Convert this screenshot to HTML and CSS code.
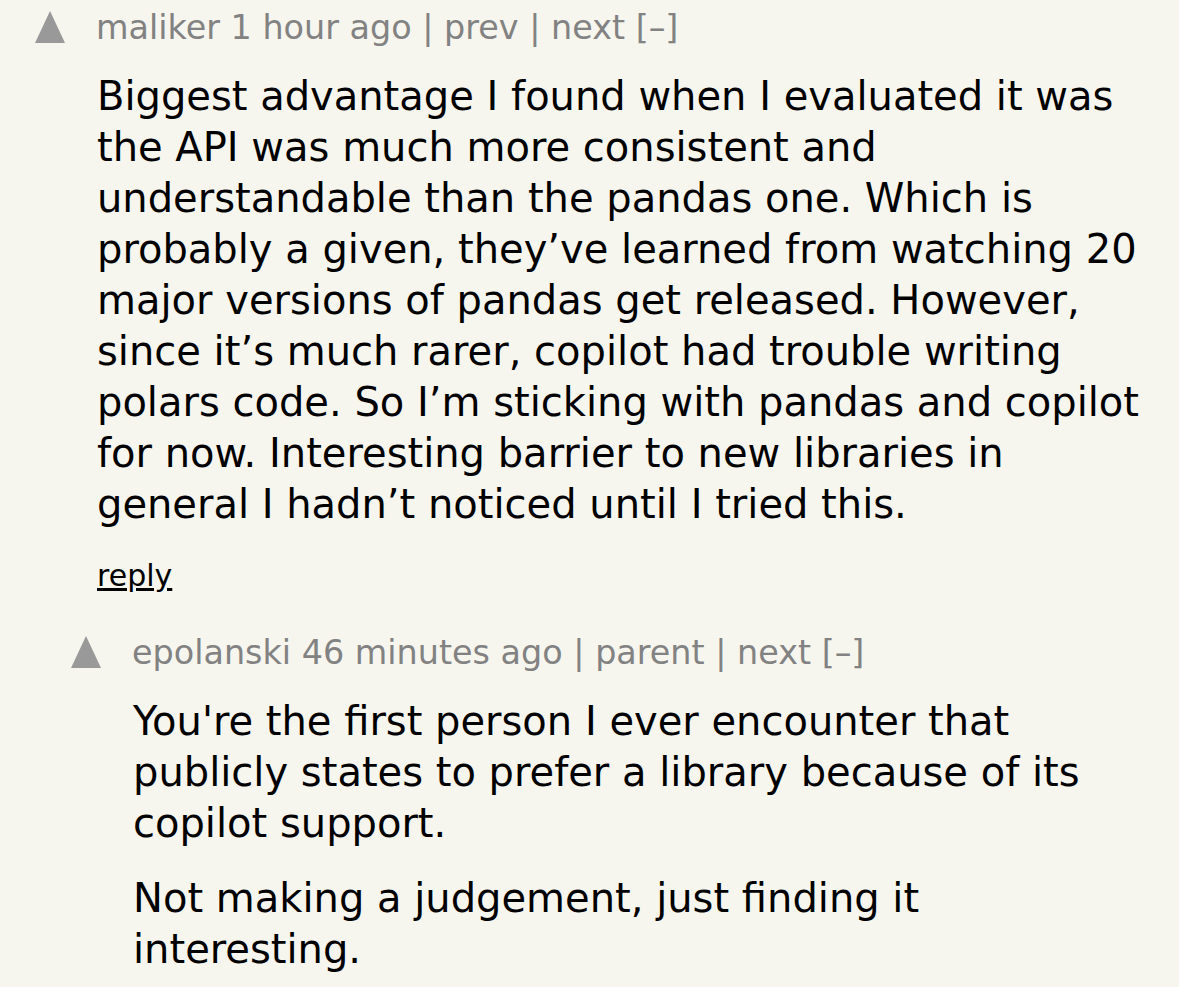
FILE: index.html
```html
<!DOCTYPE html>
<html>
<head>
<meta charset="utf-8">
<link rel="stylesheet" href="styles.css">
</head>
<body>
<div class="thread">
  <div class="comment">
    <div class="head">
      <span class="vote"></span>
      <span class="meta">maliker 1 hour ago | prev | next [–]</span>
    </div>
    <div class="body">
      <p>Biggest advantage I found when I evaluated it was the API was much more consistent and understandable than the pandas one. Which is probably a given, they’ve learned from watching 20 major versions of pandas get released. However, since it’s much rarer, copilot had trouble writing polars code. So I’m sticking with pandas and copilot for now. Interesting barrier to new libraries in general I hadn’t noticed until I tried this.</p>
      <div class="reply"><a href="#">reply</a></div>
    </div>
  </div>
  <div class="comment nested">
    <div class="head">
      <span class="vote"></span>
      <span class="meta">epolanski 46 minutes ago | parent | next [–]</span>
    </div>
    <div class="body">
      <p>You're the first person I ever encounter that publicly states to prefer a library because of its copilot support.</p>
      <p>Not making a judgement, just finding it interesting.</p>
    </div>
  </div>
</div>
</body>
</html>
```
FILE: styles.css
```css
html, body {
  margin: 0;
  padding: 0;
  background: #f6f6ef;
}
body {
  font-family: "DejaVu Sans", Verdana, sans-serif;
  color: #000;
}
.thread {
  padding: 7px 21px 0 35px;
}
.comment {
  display: flex;
  flex-direction: column;
}
.nested {
  margin-left: 36px;
  margin-top: 36px;
}
.head {
  display: flex;
  align-items: center;
  gap: 31px;
  height: 40px;
}
.vote {
  width: 0;
  height: 0;
  border-left: 15.5px solid transparent;
  border-right: 15.5px solid transparent;
  border-bottom: 32px solid #999999;
}
.meta {
  font-size: 33.4px;
  color: #828282;
}
.body {
  padding-left: 62px;
  font-size: 40px;
  line-height: 51px;
}
.body p {
  margin: 24px 0 0 0;
}
.reply {
  margin-top: 26px;
  font-size: 30px;
  line-height: 40px;
}
.reply a {
  color: #000;
  text-decoration: underline;
}
```
